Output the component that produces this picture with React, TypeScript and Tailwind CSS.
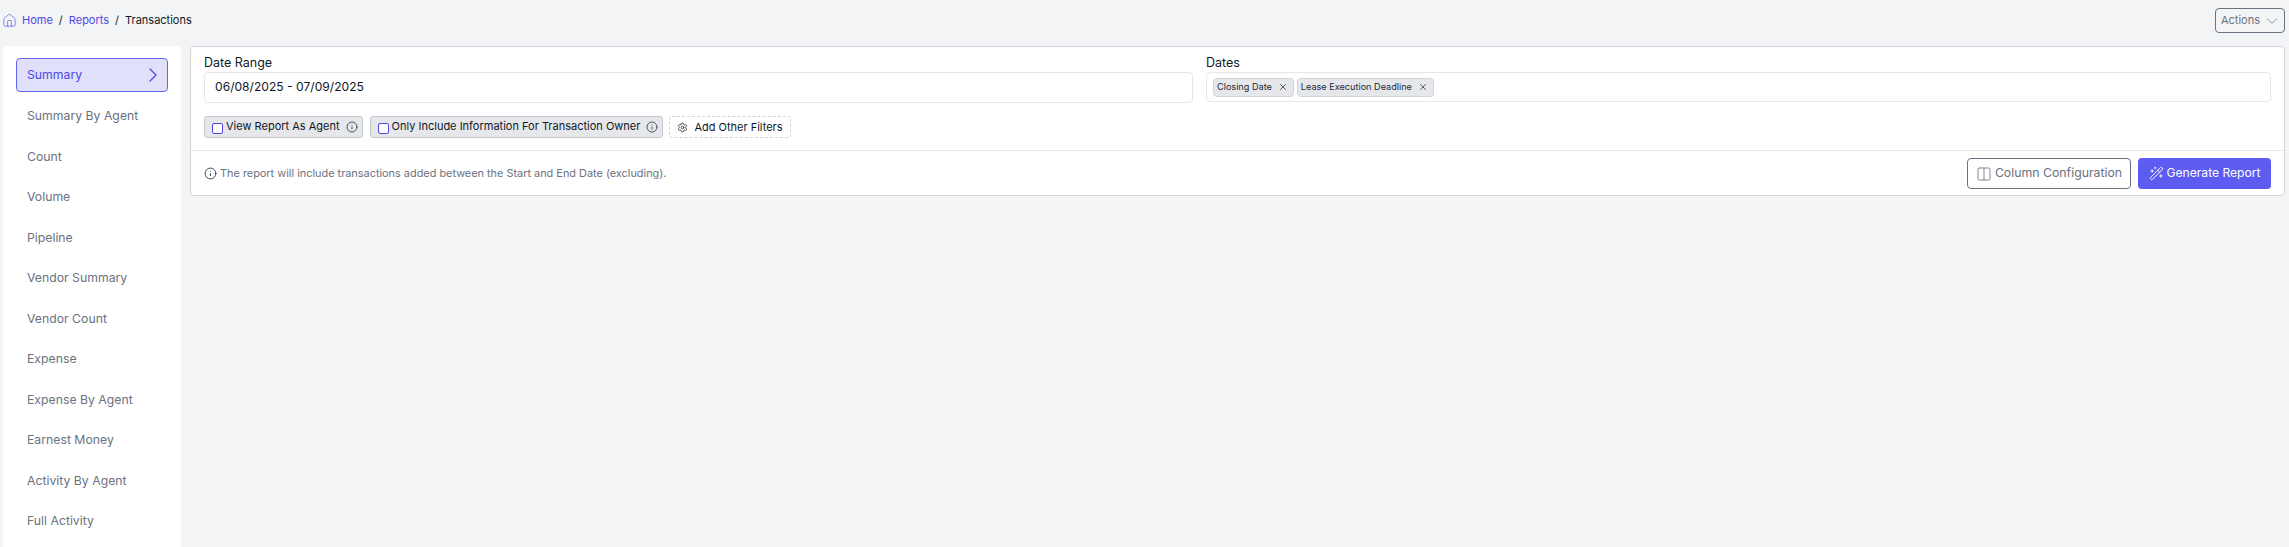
import { ChevronDown, ChevronRight, Columns2, House, Info, Settings, WandSparkles, X } from "lucide-react";

const reports = [
    "Summary By Agent",
    "Count",
    "Volume",
    "Pipeline",
    "Vendor Summary",
    "Vendor Count",
    "Expense",
    "Expense By Agent",
    "Earnest Money",
    "Activity By Agent",
    "Full Activity",
];

function CheckChip({ label }: { label: string }) {
    return (
        <label className="flex h-[22px] items-center rounded-[3px] border border-[#c4c9d1] bg-[#e5e7eb] pl-[7px] pr-[4px] text-[11px] text-[#111827]">
            <span className="mt-[3px] h-[11px] w-[11px] rounded-[2px] border border-[#4f46e5] bg-white" />
            <span className="ml-[3px] pb-px">{label}</span>
            <Info className="ml-[6px] h-[12px] w-[12px] text-[#374151]" strokeWidth={1.75} />
        </label>
    );
}

function Tag({ label }: { label: string }) {
    return (
        <span className="flex h-[19px] items-center rounded-[4px] border border-[#d1d5db] bg-[#e5e7eb] pl-[3px] pr-[5px] text-[9.15px] text-[#1f2937]">
            {label}
            <X className="ml-[6px] h-[10px] w-[10px] text-[#374151]" strokeWidth={2} />
        </span>
    );
}

export default function App() {
    return (
        <div className="h-[547px] overflow-hidden bg-[#f3f4f6] font-['Inter',sans-serif]">
            <header className="flex h-[46px] items-start justify-between pl-[2px] pr-[4px] pt-[8px]">
                <nav className="mt-[4px] flex items-center text-[11px] text-[#4f46e5]">
                    <House className="h-[15px] w-[15px] text-[#6366f1]" strokeWidth={1.25} />
                    <span className="ml-[5px]">Home</span>
                    <span className="ml-[6px] text-[#111827]">/</span>
                    <span className="ml-[6px]">Reports</span>
                    <span className="ml-[6px] text-[#111827]">/</span>
                    <span className="ml-[6px] text-[#111827]">Transactions</span>
                </nav>
                <button className="flex h-[25px] w-[70px] items-center justify-center rounded-[4px] border border-[#6b7280] pl-[2px] text-[11px] text-[#6b7280]">
                    Actions
                    <ChevronDown className="ml-[3px] h-[18px] w-[18px]" strokeWidth={1} />
                </button>
            </header>

            <div className="flex gap-[9px] pl-[3px] pr-[4px]">
                <aside className="h-[501px] w-[178px] shrink-0 rounded-t-[4px] bg-white px-[13px] pt-[12px]">
                    <div className="flex h-[34px] items-center justify-between rounded-[4px] border border-[#6366f1] bg-[#e0e0fa] pl-[10px] pr-[2px] text-[12.25px] text-[#4f46e5]">
                        Summary
                        <ChevronRight className="h-[24px] w-[24px]" strokeWidth={1.25} />
                    </div>
                    <ul className="mt-[4px] text-[12.25px] text-[#6b7280]">
                        {reports.map((report) => (
                            <li key={report} className="flex h-[40.5px] items-center pl-[11px]">
                                {report}
                            </li>
                        ))}
                    </ul>
                </aside>

                <main className="h-[150px] flex-1 rounded-[4px] border border-[#d1d5db] bg-white">
                    <div className="h-[103px] px-[13px] pt-[6px]">
                        <div className="grid grid-cols-[989px_1fr] gap-x-[13px]">
                            <div>
                                <p className="text-[12.5px] leading-[19px] text-[#111827]">Date Range</p>
                                <div className="flex h-[31px] items-center rounded-[4px] border border-[#e5e7eb] px-[10px] text-[12.1px] text-[#111827]">
                                    06/08/2025 - 07/09/2025
                                </div>
                            </div>
                            <div>
                                <p className="text-[12.5px] leading-[19px] text-[#111827]">Dates</p>
                                <div className="flex h-[30px] items-center gap-[3px] rounded-[4px] border border-[#e5e7eb] px-[6px]">
                                    <Tag label="Closing Date" />
                                    <Tag label="Lease Execution Deadline" />
                                </div>
                            </div>
                        </div>
                        <div className="mt-[13px] flex items-center">
                            <CheckChip label="View Report As Agent" />
                            <div className="ml-[7px]">
                                <CheckChip label="Only Include Information For Transaction Owner" />
                            </div>
                            <button className="ml-[6px] flex h-[22px] items-center rounded-[3px] border border-dashed border-[#d1d5db] px-[7px] text-[11px] text-[#111827]">
                                <Settings className="mr-[6px] h-[11px] w-[11px] text-[#111827]" strokeWidth={1.5} />
                                Add Other Filters
                            </button>
                        </div>
                    </div>
                    <div className="flex h-[45px] items-center justify-between border-t border-[#e5e7eb] px-[13px] pt-px">
                        <p className="flex items-center text-[10.9px] text-[#6b7280]">
                            <Info className="mr-[3px] h-[13px] w-[13px] text-[#374151]" strokeWidth={1.75} />
                            The report will include transactions added between the Start and End Date (excluding).
                        </p>
                        <div className="flex gap-[7px]">
                            <button className="flex h-[31px] w-[164px] items-center justify-center rounded-[4px] border border-[#6b7280] text-[12.3px] text-[#6b7280]">
                                <Columns2 className="mr-[3px] h-[16px] w-[16px]" strokeWidth={1.25} />
                                Column Configuration
                            </button>
                            <button className="flex h-[31px] w-[133px] items-center justify-center rounded-[4px] bg-[#5c5cf0] text-[12.1px] text-white">
                                <WandSparkles className="mr-[3px] h-[15px] w-[15px]" strokeWidth={1.5} />
                                Generate Report
                            </button>
                        </div>
                    </div>
                </main>
            </div>
        </div>
    );
}
